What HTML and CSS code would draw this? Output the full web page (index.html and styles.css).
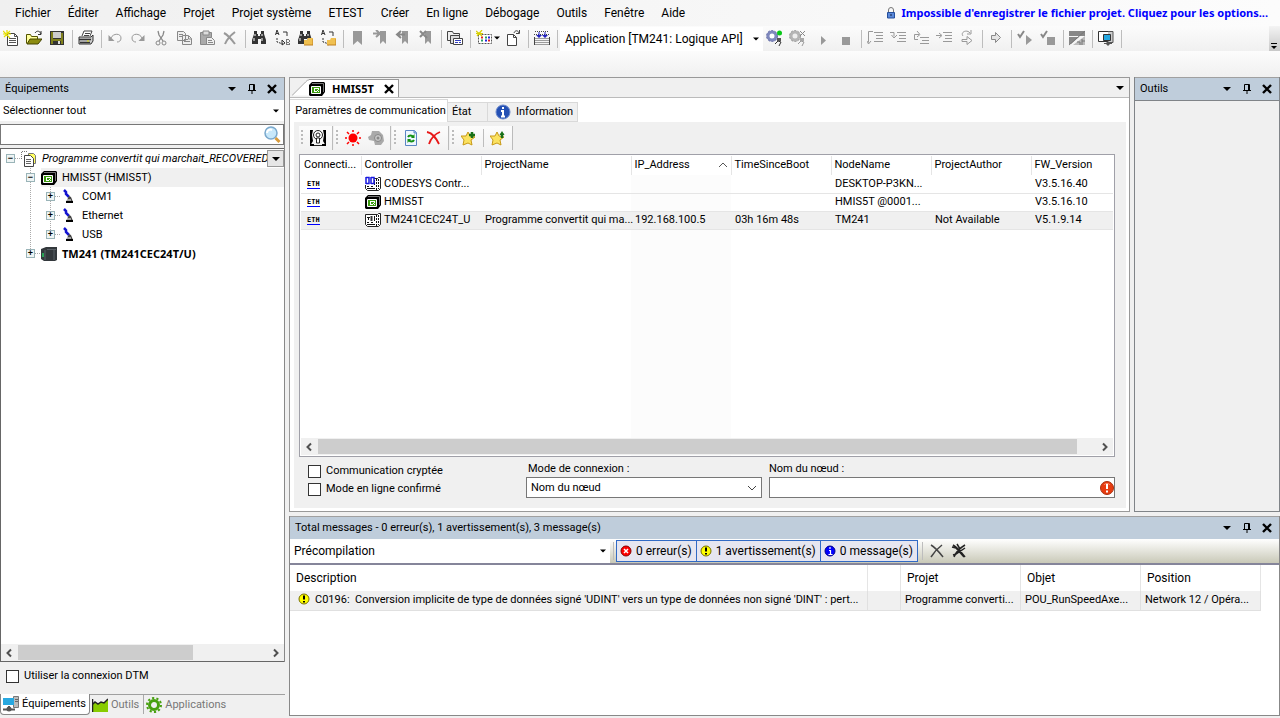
FILE: index.html
```html
<!DOCTYPE html>
<html lang="fr">
<head>
  <meta charset="UTF-8">
  <title>HMIS5T</title>
  <link rel="stylesheet" href="styles.css">
</head>
<body>

  <!-- icon sprite -->
  <svg class="sprite">
    <symbol id="new" viewBox="0 0 16 16"><path d="M4.500 3.500h7l3 3v9h-10z" fill="#fff" stroke="#444"/><path d="M11.500 3.500v3h3M6 8.500h7M6 10.500h7M6 12.500h7" fill="none" stroke="#555"/><path d="M0 1l7 7M7 1L1 7M4 0v4M0 4h8" stroke="#e6e000" stroke-width="1.200"/></symbol>
    <symbol id="open" viewBox="0 0 16 16"><path d="M.5 13.500v-9h4l1 2h6v3" fill="#ffff9c" stroke="#555500"/><path d="M1 14l3-5h12l-4 5z" fill="#8c8c10" stroke="#444400"/><path d="M9 3c2-3 5-2 6 1M15 1v3.500h-3" fill="none" stroke="#333"/></symbol>
    <symbol id="save" viewBox="0 0 16 16"><path d="M1 1h14v14H1z" fill="#333"/><path d="M2 2h2v12H2zM12 3h2v11h-2zM4 9h8v2H4z" fill="#80801c"/><path d="M4 2h8v6H4z" fill="#ccc"/><path d="M9 11h2v3H9z" fill="#ddd"/></symbol>
    <symbol id="print" viewBox="0 0 16 16"><path d="M4 6l2-5h8l-2 5" fill="#fff" stroke="#444"/><path d="M7 3.500h5M6 5.500h5" stroke="#444"/><path d="M1 7h12l2-2v6l-2 3H1z" fill="#ccc" stroke="#333"/><path d="M1 9.500h12M2 12.500h10" stroke="#333" stroke-width="1.500"/><path d="M9 11h2" stroke="#e0e000"/></symbol>
    <symbol id="undo" viewBox="0 0 16 16"><path d="M4 8c2-5 10-5 10 0 0 3-2 4-4 4" fill="none" stroke="#999"/><path d="M1.500 5v6h6z" fill="#999"/></symbol>
    <symbol id="redo" viewBox="0 0 16 16"><path d="M12 8C10 3 2 3 2 8c0 3 2 4 4 4" fill="none" stroke="#999"/><path d="M14.500 5v6h-6z" fill="#999"/></symbol>
    <symbol id="cut" viewBox="0 0 16 16"><path d="M5 1l1 4 4 6M11 1l-1 4-4 6" fill="none" stroke="#888" stroke-width="1.300"/><circle cx="5" cy="13" r="2" fill="none" stroke="#888"/><circle cx="11" cy="13" r="2" fill="none" stroke="#888"/></symbol>
    <symbol id="copy" viewBox="0 0 16 16"><path d="M1.500 1.500h6l2 2v7h-8zM6.500 5.500h6l3 3v6h-9z" fill="#eee" stroke="#888"/><path d="M3 4.500h4M3 6.500h3M8 9.500h4M8 11.500h6M12.500 6v3h3" stroke="#888" fill="none"/></symbol>
    <symbol id="paste" viewBox="0 0 16 16"><path d="M1.500 2.500h11v12h-11z" fill="#aaa" stroke="#888"/><path d="M4 1h6v4H4z" fill="#ddd" stroke="#888"/><path d="M7.500 7.500h5l3 3v4h-8z" fill="#eee" stroke="#888"/><path d="M9 10.500h4M9 12.500h5" stroke="#888"/></symbol>
    <symbol id="delete" viewBox="0 0 16 16"><path d="M2 3c4 2 8 7 11 11M13 2C9 5 5 9 3 14" fill="none" stroke="#999" stroke-width="2"/></symbol>
    <symbol id="find" viewBox="0 0 16 16"><path d="M3 1h3v3h1v2h2V4h1V1h3v3l2 6v4h-5V9H7v5H1v-4l2-6z" fill="#333"/><path d="M4 4v2M3 8v3M11 4v2M11 8v3" stroke="#fff"/></symbol>
    <symbol id="replace" viewBox="0 0 16 16"><path d="M1.500 5L3 0l2 5M2 3.500h2.500" fill="none" stroke="#333"/><path d="M12.500 9v6M12 9.500h3M12 12.500h3M12 14.500h3M15.500 10v2M15.500 13v2" fill="none" stroke="#777"/><path d="M3 8v4l6 2" fill="none" stroke="#333" stroke-dasharray="2 1"/><path d="M8 10v5l3-2zM9 2h4v4" fill="none" stroke="#333"/></symbol>
    <symbol id="folderbit" viewBox="0 0 16 16"><path d="M7 10h3l1-2h5v7H7z" fill="#f0c050"/><path d="M7 15h9V9" fill="none" stroke="#c08020"/></symbol>
    <symbol id="mark" viewBox="0 0 16 16"><path d="M4 1h9v14l-4.500-4L4 15z" fill="#999"/></symbol>
    <symbol id="marknext" viewBox="0 0 16 16"><path d="M8 1h6v13l-3-3-3 3z" fill="#999"/><path d="M1 3.500h6M4 0l4 3.500L4 7" fill="none" stroke="#999" stroke-width="2"/></symbol>
    <symbol id="markprev" viewBox="0 0 16 16"><path d="M7 1h6v13l-3-3-3 3z" fill="#999"/><path d="M10 4.500H3M6 1L2 4.500 6 8" fill="none" stroke="#888" stroke-width="2"/></symbol>
    <symbol id="markdel" viewBox="0 0 16 16"><path d="M7 1h6v13l-3-3-3 3z" fill="#999"/><path d="M2 1l7 7M8 1L2 7" fill="none" stroke="#888" stroke-width="2"/></symbol>
    <symbol id="windows" viewBox="0 0 16 16"><path d="M.5 10.500v-9h5l1 2h6v7z" fill="#eee" stroke="#444"/><path d="M3.500 5.500h9v8h-9z" fill="#ddd" stroke="#444"/><path d="M6.500 8.500h9v6h-9z" fill="#fff" stroke="#444"/><path d="M8 10.500h6M8 12.500h3M12 12.500h2" stroke="#3340c0"/></symbol>
    <symbol id="build" viewBox="0 0 16 16"><path d="M2.500 4.500h13v9h-13z" fill="#fff" stroke="#555" stroke-dasharray="2 1"/><path d="M5 7.500h2M12 10.500h2" stroke="#d22" stroke-width="2"/><path d="M9 7.500h2M5 10.500h2" stroke="#28a060" stroke-width="2"/><path d="M12 7.500h2M9 10.500h2" stroke="#22d" stroke-width="2"/><path d="M0 1l6 5M6 0L1 6M0 3.500h7" stroke="#d8d000" stroke-width="1.200"/></symbol>
    <symbol id="pageout" viewBox="0 0 16 16"><path d="M2.500 4.500h6l3 3v8h-9z" fill="#fff" stroke="#444"/><path d="M8.500 4.500v3h3M9 3c1-3 4-3 5 0M14.500 0v3.500H11" fill="none" stroke="#444"/></symbol>
    <symbol id="download" viewBox="0 0 16 16"><path d="M1 1.500h14M0 4.500h16M1.500 8.500h13M1.500 10.500h13M1.500 12.500h13M.5 14.500h15" stroke="#444" stroke-dasharray="1 1"/><path d="M.5 7v8M15.500 7v8" stroke="#444"/><path d="M5 2v5M11 2v5" stroke="#22c"/><path d="M2 5h6L5 8zM8 5h6l-3 3z" fill="#2222c0"/></symbol>
    <symbol id="login" viewBox="0 0 16 16"><circle cx="6" cy="6" r="4" fill="#fff" stroke="#7f88bd" stroke-width="3"/><circle cx="6" cy="6" r="5.500" fill="none" stroke="#6870a8" stroke-dasharray="2 1.500"/><circle cx="13.500" cy="3" r="2.500" fill="#08c818"/><path d="M11 8h4v3h-4z" fill="#555"/><path d="M9 14l3-3 3 1-2 4" fill="none" stroke="#333"/></symbol>
    <symbol id="logout" viewBox="0 0 16 16"><circle cx="6" cy="6" r="4" fill="#eee" stroke="#b5b5b5" stroke-width="3"/><circle cx="6" cy="6" r="5.500" fill="none" stroke="#999" stroke-dasharray="2 1.500"/><path d="M11 1l5 5M16 1l-5 5" stroke="#888"/><path d="M11 8h4v3h-4z" fill="#aaa"/><path d="M9 14l3-3 3 1-2 4" fill="none" stroke="#999"/></symbol>
    <symbol id="play" viewBox="0 0 16 16"><path d="M6 6l5 4.500L6 15z" fill="#999"/></symbol>
    <symbol id="stop" viewBox="0 0 16 16"><path d="M4 7h8v8H4z" fill="#999"/></symbol>
    <symbol id="stepover" viewBox="0 0 16 16"><path d="M6 1.500H1.500v11M0 11l1.500 3L4 11M7 2.500h9M9 5.500h7M9 8.500h7M7 11.500h9" fill="none" stroke="#999"/></symbol>
    <symbol id="stepinto" viewBox="0 0 16 16"><path d="M0 2.500h4v4M1.500 5L4 8l3-3M7 2.500h9M9 5.500h7M9 8.500h7M7 11.500h9" fill="none" stroke="#999"/></symbol>
    <symbol id="stepout" viewBox="0 0 16 16"><path d="M5 9.500H1.500v-5H6M4 1l3 3.500L4 7M7 7.500h9M9 10.500h7M7 13.500h9" fill="none" stroke="#999"/></symbol>
    <symbol id="runto" viewBox="0 0 16 16"><path d="M0 5.500h5M3 3l3 2.500L3 8M7 2.500h9M9 5.500h7M9 8.500h7M7 11.500h9" fill="none" stroke="#999"/></symbol>
    <symbol id="cycle" viewBox="0 0 16 16"><path d="M4 6c-3-4 4-7 7-3M12 0v4H8M3 9.500h5v-3l5 4-5 4v-3H3z" fill="none" stroke="#999"/></symbol>
    <symbol id="arrow" viewBox="0 0 16 16"><path d="M3.500 5.500h4v-3l5 5-5 5v-3h-4z" fill="#e4e4e4" stroke="#888"/></symbol>
    <symbol id="checkplay" viewBox="0 0 16 16"><path d="M1 4l2 3 4-6" fill="none" stroke="#888" stroke-width="2"/><path d="M9 5l6 5-6 5z" fill="#999"/></symbol>
    <symbol id="checkstop" viewBox="0 0 16 16"><path d="M1 4l2 3 4-6" fill="none" stroke="#888" stroke-width="2"/><path d="M7 7h8v8H7z" fill="#999"/></symbol>
    <symbol id="layout" viewBox="0 0 16 16"><path d="M0 1h16v5H0zM0 7h10L2 14H0z" fill="#888"/><path d="M16 6L4 15h12z" fill="#bbb"/><path d="M16 1L0 15M8 12h3v3M13 9v6M13 11h3" stroke="#777" fill="none"/></symbol>
    <symbol id="remote" viewBox="0 0 16 16"><path d="M.5 1.500h10v10H.5z" fill="#fff" stroke="#333"/><path d="M10 1.500h5v11h-5" fill="#ccc" stroke="#555"/><path d="M5.500 4.500h7v6h-7z" fill="#26a8e0" stroke="#333"/><path d="M6 13.500h8M9 12h2v3H9z" fill="#555" stroke="#555"/></symbol>
    <symbol id="lock" viewBox="0 0 10 12"><path d="M2.500 5V3a2.500 2.500 0 0 1 5 0v2" fill="none" stroke="#777"/><path d="M1.500 5.500h7V11h-7z" fill="#5a88d8" stroke="#244f9c"/><path d="M5 7v2" stroke="#124"/></symbol>
    <symbol id="down" viewBox="0 0 10 10"><path d="M1 3h8L5 7z" fill="#000"/></symbol>
    <symbol id="downsmall" viewBox="0 0 10 10"><path d="M2 3.500h6L5 6.500z" fill="#000"/></symbol>
    <symbol id="more" viewBox="0 0 10 10"><path d="M2 2.500h6" stroke="#000"/><path d="M2 5h6L5 8z" fill="#000"/></symbol>
    <symbol id="pin" viewBox="0 0 10 10"><path d="M2.500 6V.5h5V6M6.500 1v5M1 6.500h8M5 7v3" fill="none" stroke="#000"/></symbol>
    <symbol id="close" viewBox="0 0 10 10"><path d="M1 1l8 8M9 1L1 9" stroke="#000" stroke-width="2.400"/></symbol>
    <symbol id="search" viewBox="0 0 18 18"><circle cx="8" cy="7" r="6" fill="#c8e8fa" stroke="#7aa8cc" stroke-width="1.500"/><path d="M4 7c0-3 3-4 5-3" stroke="#fff" stroke-width="2" fill="none"/><path d="M12.500 12l4 4" stroke="#d89a3a" stroke-width="3"/></symbol>
    <symbol id="project" viewBox="0 0 16 16"><path d="M.5 8V.5H7" fill="none" stroke="#777" stroke-dasharray="1 1"/><path d="M7.500 2.500h5l2 2v8h-7z" fill="#ffff60" stroke="#777"/><path d="M3.500 4.500h6l3 3v8h-9z" fill="#fff" stroke="#444"/><path d="M5 8.500h5M5 10.500h5M5 12.500h5" stroke="#666"/></symbol>
    <symbol id="hmi" viewBox="0 0 16 16"><path d="M0 4l3-3h12l1 1v9l-3 4H1l-1-1z" fill="#000"/><path d="M3 2.500h11.500V11" fill="none" stroke="#777"/><path d="M2.500 5.500h9v7h-9z" fill="#3c9c10" stroke="#fff"/><path d="M5 10.500h3M5 7.500h5M5.500 7v3M9.500 7v2M8 9l2 2" fill="none" stroke="#fff"/></symbol>
    <symbol id="port" viewBox="0 0 16 16"><path d="M3 1l2 2v2l3 3" fill="none" stroke="#1414d0" stroke-width="2.500"/><path d="M8 7l2 1 2 5H5z" fill="#444"/><path d="M6 11h4" stroke="#fff"/><path d="M5 13h7" stroke="#000" stroke-width="2"/></symbol>
    <symbol id="plc" viewBox="0 0 16 16"><path d="M0 3l5-2h11v13l-2 1H3l-3-2z" fill="#33383c"/><path d="M4 4v10M6 3.500h9M13 4v10" stroke="#596066"/><path d="M2 7v4" stroke="#28c860" stroke-width="1.500"/></symbol>
    <symbol id="ctrl" viewBox="0 0 16 16"><path d="M.5 2.500h12l1-1h2v11l-2 2h-11l-2-2z" fill="#fff" stroke="#222"/><path d="M2 5.500h3M3.500 5v3M2 10.500h2M6 10.500h2M2 12.500h8M9.500 4v5" stroke="#111"/><path d="M6.500 4v5" stroke="#333" stroke-width="2"/><path d="M11.500 3v11M13.500 3v10" stroke="#111" stroke-dasharray="2 1"/></symbol>
    <symbol id="codesys" viewBox="0 0 16 16"><use href="#ctrl"/><path d="M0 0h9v9H0z" fill="#fff"/><path d="M1 1v7M1 1.500h3v6H1M6 1v7M6 1.500h3v6H6" fill="none" stroke="#1818e0" stroke-width="1.500"/></symbol>
    <symbol id="antenna" viewBox="0 0 16 16"><path d="M0 0h3L2 5l1 6-3 5zM16 0h-3l1 5-1 6 3 5z" fill="#000"/><circle cx="8" cy="5" r="4.500" fill="#fff" stroke="#222"/><circle cx="8" cy="5" r="2" fill="#fff" stroke="#222"/><path d="M6.500 8h3v5h-3zM4 15.500h8" fill="#fff" stroke="#222"/><path d="M0 14h4v2H0zM12 14h4v2h-4z"/></symbol>
    <symbol id="flash" viewBox="0 0 16 16"><circle cx="8" cy="8" r="4.500" fill="#f00"/><path d="M8 0v2M8 14v2M0 8h2M14 8h2M2 2l2 2M12 12l2 2M14 2l-2 2M4 12l-2 2" stroke="#f00" stroke-width="1.500"/></symbol>
    <symbol id="horn" viewBox="0 0 16 16"><path d="M0 7l3-2 1-4h7l4 4 1 6-3 4H7l-1-4-5-1z" fill="#aaa"/><circle cx="10" cy="8" r="3.500" fill="#c8c8c8" stroke="#888"/><circle cx="10" cy="8" r="1.500" fill="#888"/></symbol>
    <symbol id="refresh" viewBox="0 0 16 16"><path d="M2.500.5h9l2 2v13h-11z" fill="#eef6ff" stroke="#5b86c4"/><path d="M11 .5v2.500h2.500" fill="#a8c8f0" stroke="#5b86c4"/><path d="M5 7c1-2 4-2 5 0M11 10c-1 2-4 2-5 0" fill="none" stroke="#149014" stroke-width="2"/><path d="M11.500 4v4H8zM4.500 13V9H8z" fill="#149014"/></symbol>
    <symbol id="redx" viewBox="0 0 16 16"><path d="M1 2c6 1 9 6 12 12M14 2C9 4 5 8 3 14" fill="none" stroke="#e81818" stroke-width="1.800"/></symbol>
    <symbol id="starplus" viewBox="0 0 16 16"><path d="M7 2l2 4 5 1-4 3 1 5-4-2-5 2 1-5-3-4h5z" fill="#fbe260" stroke="#c89a18"/><path d="M8 5h6M11 2v6" stroke="#187018" stroke-width="2.500"/></symbol>
    <symbol id="starup" viewBox="0 0 16 16"><path d="M7 2l2 4 5 1-4 3 1 5-4-2-5 2 1-5-3-4h5z" fill="#fbe260" stroke="#c89a18"/><path d="M12 8V3" stroke="#187018" stroke-width="2.500"/><path d="M9.500 5L12 1l2.500 4z" fill="#187018"/></symbol>
    <symbol id="info" viewBox="0 0 16 16"><circle cx="8" cy="8" r="7" fill="#2450b4" stroke="#6a88cc"/><path d="M8 3v2M6 7h2v5M6 12.500h4" fill="none" stroke="#fff" stroke-width="2"/></symbol>
    <symbol id="error" viewBox="0 0 12 12"><circle cx="6" cy="6" r="5" fill="#f00" stroke="#800"/><path d="M4 4l4 4M8 4L4 8" stroke="#fff" stroke-width="1.500"/></symbol>
    <symbol id="warn" viewBox="0 0 12 12"><circle cx="6" cy="6" r="5" fill="#ff0" stroke="#776f00"/><path d="M6 2.500v4M6 8v1.500" stroke="#000" stroke-width="2"/></symbol>
    <symbol id="msg" viewBox="0 0 12 12"><circle cx="6" cy="6" r="5" fill="#00f" stroke="#008"/><path d="M6 2v2M5 5.500h1.500V9M4.500 9.500h4" fill="none" stroke="#fff" stroke-width="1.200"/></symbol>
    <symbol id="alert" viewBox="0 0 14 14"><circle cx="7" cy="7" r="6.500" fill="#e83c10" stroke="#a83010"/><path d="M4 4c1-2 5-2 6 0" stroke="#ff9070" fill="none"/><path d="M7 3v5M7 9.500v2" stroke="#fff" stroke-width="2"/></symbol>
    <symbol id="x1" viewBox="0 0 16 16"><path d="M2 2c5 3 8 7 12 12M13 2C9 5 5 9 2 14" fill="none" stroke="#444" stroke-width="1.500"/></symbol>
    <symbol id="x2" viewBox="0 0 16 16"><path d="M2 2c5 3 8 7 12 12M14 2C9 5 5 9 3 14M1 4l4 1 8 9M14 5L5 11l-3 1M6 1l3 5" fill="none" stroke="#222" stroke-width="1.500"/></symbol>
    <symbol id="network" viewBox="0 0 16 16"><path d="M10.500.5h5v11h-5z" fill="#bbb" stroke="#777"/><path d="M12 3.500h3M12 5.500h3" stroke="#666"/><path d="M0 2h11v7H0z" fill="#28a8e0"/><path d="M0 13.500h12M6 10v3" stroke="#555" stroke-width="2"/><circle cx="6" cy="13" r="2.500" fill="#555"/></symbol>
    <symbol id="chart" viewBox="0 0 16 16"><path d="M0 15V8l3-3 3 2 3-2 3 1 4-4v13z" fill="#8c0"/><path d="M.5 2v13M0 8l3-3 3 2 3-2 3 1 4-4" fill="none" stroke="#222" stroke-width="1.500"/></symbol>
    <symbol id="gear" viewBox="0 0 16 16"><circle cx="8" cy="8" r="4.500" fill="none" stroke="#48a010" stroke-width="3"/><circle cx="8" cy="8" r="7" fill="none" stroke="#48a010" stroke-width="2" stroke-dasharray="2.200 2.200"/></symbol>
    <symbol id="left" viewBox="0 0 10 10"><path d="M6 1.500L2.500 5 6 8.500" fill="none" stroke="#505050" stroke-width="2"/></symbol>
    <symbol id="right" viewBox="0 0 10 10"><path d="M3 1.500L6.500 5 3 8.500" fill="none" stroke="#505050" stroke-width="2"/></symbol>
    <symbol id="chevron" viewBox="0 0 10 10"><path d="M1 3l4 4 4-4" fill="none" stroke="#444"/></symbol>
    <symbol id="sort" viewBox="0 0 10 10"><path d="M1 7l4-4 4 4" fill="none" stroke="#555"/></symbol>
  </svg>

  <header class="menubar">
    <nav class="menu">
      <a href="#">Fichier</a>
      <a href="#">Éditer</a>
      <a href="#">Affichage</a>
      <a href="#">Projet</a>
      <a href="#">Projet système</a>
      <a href="#">ETEST</a>
      <a href="#">Créer</a>
      <a href="#">En ligne</a>
      <a href="#">Débogage</a>
      <a href="#">Outils</a>
      <a href="#">Fenêtre</a>
      <a href="#">Aide</a>
    </nav>
    <a class="notice" href="#"><svg class="lock"><use href="#lock"/></svg>Impossible d'enregistrer le fichier projet. Cliquez pour les options...</a>
  </header>

  <div class="toolbar">
    <button aria-label="Nouveau"><svg><use href="#new"/></svg></button>
    <button aria-label="Ouvrir"><svg><use href="#open"/></svg></button>
    <button aria-label="Enregistrer"><svg><use href="#save"/></svg></button>
    <span class="sep"></span>
    <button aria-label="Imprimer"><svg><use href="#print"/></svg></button>
    <span class="sep"></span>
    <button aria-label="Annuler"><svg><use href="#undo"/></svg></button>
    <button aria-label="Rétablir"><svg><use href="#redo"/></svg></button>
    <button aria-label="Couper"><svg><use href="#cut"/></svg></button>
    <button aria-label="Copier"><svg><use href="#copy"/></svg></button>
    <button aria-label="Coller"><svg><use href="#paste"/></svg></button>
    <button aria-label="Supprimer"><svg><use href="#delete"/></svg></button>
    <span class="sep"></span>
    <button aria-label="Rechercher"><svg><use href="#find"/></svg></button>
    <button aria-label="Remplacer"><svg><use href="#replace"/></svg></button>
    <button aria-label="Rechercher dans le projet"><svg><use href="#find"/><use href="#folderbit"/></svg></button>
    <button aria-label="Remplacer dans le projet"><svg><use href="#replace"/><use href="#folderbit"/></svg></button>
    <span class="sep"></span>
    <button aria-label="Signet"><svg><use href="#mark"/></svg></button>
    <button aria-label="Signet suivant"><svg><use href="#marknext"/></svg></button>
    <button aria-label="Signet précédent"><svg><use href="#markprev"/></svg></button>
    <button aria-label="Effacer les signets"><svg><use href="#markdel"/></svg></button>
    <span class="sep"></span>
    <button aria-label="Fenêtres"><svg><use href="#windows"/></svg></button>
    <span class="sep"></span>
    <button class="split" aria-label="Ajouter un objet"><svg><use href="#build"/></svg><svg class="glyph"><use href="#downsmall"/></svg></button>
    <button aria-label="Modifier l'objet"><svg><use href="#pageout"/></svg></button>
    <span class="sep"></span>
    <button aria-label="Compiler"><svg><use href="#download"/></svg></button>
    <span class="sep"></span>
    <button class="app-combo">Application [TM241: Logique API]<svg class="glyph"><use href="#downsmall"/></svg></button>
    <button aria-label="Connexion"><svg><use href="#login"/></svg></button>
    <button aria-label="Déconnexion"><svg><use href="#logout"/></svg></button>
    <span class="space"></span>
    <button aria-label="Démarrer"><svg><use href="#play"/></svg></button>
    <button aria-label="Arrêter"><svg><use href="#stop"/></svg></button>
    <span class="sep"></span>
    <button aria-label="Pas à pas principal"><svg><use href="#stepover"/></svg></button>
    <button aria-label="Pas à pas détaillé"><svg><use href="#stepinto"/></svg></button>
    <button aria-label="Pas à pas sortant"><svg><use href="#stepout"/></svg></button>
    <button aria-label="Exécuter jusqu'au curseur"><svg><use href="#runto"/></svg></button>
    <button aria-label="Cycle unique"><svg><use href="#cycle"/></svg></button>
    <span class="sep"></span>
    <button aria-label="Instruction suivante"><svg><use href="#arrow"/></svg></button>
    <span class="sep"></span>
    <button aria-label="Démarrer tout"><svg><use href="#checkplay"/></svg></button>
    <button aria-label="Arrêter tout"><svg><use href="#checkstop"/></svg></button>
    <span class="sep"></span>
    <button aria-label="Disposition"><svg><use href="#layout"/></svg></button>
    <span class="sep"></span>
    <button aria-label="Contrôle à distance"><svg><use href="#remote"/></svg></button>
    <span class="sep"></span>
    <button class="overflow" aria-label="Options de la barre"><svg class="glyph"><use href="#more"/></svg></button>
  </div>
  <div class="strip"></div>

  <main class="workspace">

    <aside class="devices">
      <div class="frame">
        <div class="title">
          <h2>Équipements</h2>
          <button aria-label="Menu"><svg><use href="#down"/></svg></button>
          <button aria-label="Épingler"><svg><use href="#pin"/></svg></button>
          <button aria-label="Fermer"><svg><use href="#close"/></svg></button>
        </div>
        <button class="select-all">Sélectionner tout<svg class="glyph"><use href="#downsmall"/></svg></button>
        <div class="search">
          <input type="text" aria-label="Rechercher">
          <svg><use href="#search"/></svg>
        </div>
        <div class="tree">
          <div class="node root">
            <span class="expander">−</span><svg><use href="#project"/></svg>
            <span class="name">Programme convertit qui marchait_RECOVERED</span>
            <button class="tree-drop" aria-label="Options"><svg class="glyph"><use href="#down"/></svg></button>
          </div>
          <ul>
            <li>
              <div class="node selected"><span class="expander">−</span><svg><use href="#hmi"/></svg><span class="name">HMIS5T (HMIS5T)</span></div>
              <ul>
                <li class="node"><span class="expander">+</span><svg><use href="#port"/></svg><span class="name">COM1</span></li>
                <li class="node"><span class="expander">+</span><svg><use href="#port"/></svg><span class="name">Ethernet</span></li>
                <li class="node"><span class="expander">+</span><svg><use href="#port"/></svg><span class="name">USB</span></li>
              </ul>
            </li>
            <li class="node active"><span class="expander">+</span><svg><use href="#plc"/></svg><span class="name">TM241 (TM241CEC24T/U)</span></li>
          </ul>
          <div class="scrollbar">
            <button aria-label="Défiler à gauche"><svg><use href="#left"/></svg></button>
            <span class="thumb tree-thumb"></span>
            <button aria-label="Défiler à droite"><svg><use href="#right"/></svg></button>
          </div>
        </div>
      </div>
      <label class="check dtm"><input type="checkbox">Utiliser la connexion DTM</label>
      <div class="bottom-tabs">
        <button class="current"><svg><use href="#network"/></svg>Équipements</button>
        <button><svg><use href="#chart"/></svg>Outils</button>
        <button><svg><use href="#gear"/></svg>Applications</button>
      </div>
    </aside>

    <div class="center">
      <div class="upper">
        <section class="editor">
          <div class="doc-tabs">
            <svg class="slant" viewBox="0 0 20 19"><path d="M0 19L16 3q3-2.500 4-2.500V19z" fill="#fff"/><path d="M0 19L16 3q2-2.500 4-2.500" fill="none" stroke="#999"/></svg>
            <div class="doc-tab">
              <svg><use href="#hmi"/></svg>
              <span>HMIS5T</span>
              <button aria-label="Fermer l'onglet"><svg class="glyph"><use href="#close"/></svg></button>
            </div>
            <button class="doc-list" aria-label="Liste des onglets"><svg class="glyph"><use href="#down"/></svg></button>
          </div>
          <div class="page-tabs">
            <button class="current">Paramètres de communication</button>
            <button class="state">État</button>
            <button class="information"><svg><use href="#info"/></svg>Information</button>
          </div>
          <div class="page">
            <div class="tools">
              <div class="group"><button aria-label="Connexion"><svg><use href="#antenna"/></svg></button></div>
              <div class="group"><button aria-label="Clignoter"><svg><use href="#flash"/></svg></button><button aria-label="Avertisseur"><svg><use href="#horn"/></svg></button></div>
              <div class="group"><button aria-label="Actualiser"><svg><use href="#refresh"/></svg></button><button aria-label="Retirer"><svg><use href="#redx"/></svg></button></div>
              <div class="group"><button aria-label="Ajouter aux favoris"><svg><use href="#starplus"/></svg></button><span class="sep"></span><button aria-label="Favori"><svg><use href="#starup"/></svg></button></div>
            </div>
            <div class="grid">
              <table class="controllers">
                <colgroup>
                  <col class="w60"><col class="w120"><col class="w150"><col class="w100"><col class="w100"><col class="w100"><col class="w100"><col>
                </colgroup>
                <thead>
                  <tr><th>Connecti...</th><th>Controller</th><th>ProjectName</th><th class="sorted"><span>IP_Address<svg class="glyph"><use href="#sort"/></svg></span></th><th>TimeSinceBoot</th><th>NodeName</th><th>ProjectAuthor</th><th>FW_Version</th></tr>
                </thead>
                <tbody>
                  <tr><td><span class="eth">ETH</span></td><td><svg><use href="#codesys"/></svg>CODESYS Contr...</td><td></td><td></td><td></td><td>DESKTOP-P3KN...</td><td></td><td>V3.5.16.40</td></tr>
                  <tr><td><span class="eth">ETH</span></td><td><svg><use href="#hmi"/></svg>HMIS5T</td><td></td><td></td><td></td><td>HMIS5T @0001...</td><td></td><td>V3.5.16.10</td></tr>
                  <tr class="selected"><td><span class="eth">ETH</span></td><td><svg><use href="#ctrl"/></svg>TM241CEC24T_U</td><td>Programme convertit qui ma...</td><td>192.168.100.5</td><td>03h 16m 48s</td><td>TM241</td><td>Not Available</td><td>V5.1.9.14</td></tr>
                </tbody>
              </table>
              <div class="scrollbar">
                <button aria-label="Défiler à gauche"><svg><use href="#left"/></svg></button>
                <span class="thumb"></span>
                <span class="track-end"></span>
                <button aria-label="Défiler à droite"><svg><use href="#right"/></svg></button>
              </div>
            </div>
            <div class="connection">
              <div class="checks">
                <label class="check"><input type="checkbox">Communication cryptée</label>
                <label class="check"><input type="checkbox">Mode en ligne confirmé</label>
              </div>
              <div class="field mode">
                <label for="mode">Mode de connexion :</label>
                <div class="select-box">
                  <select id="mode"><option>Nom du nœud</option></select>
                  <svg class="glyph"><use href="#chevron"/></svg>
                </div>
              </div>
              <div class="field node-name">
                <label for="nodeName">Nom du nœud :</label>
                <div class="select-box">
                  <input type="text" id="nodeName">
                  <svg class="alert"><use href="#alert"/></svg>
                </div>
              </div>
            </div>
          </div>
        </section>

        <aside class="toolbox">
          <div class="title">
            <h2>Outils</h2>
            <button aria-label="Menu"><svg><use href="#down"/></svg></button>
            <button aria-label="Épingler"><svg><use href="#pin"/></svg></button>
            <button aria-label="Fermer"><svg><use href="#close"/></svg></button>
          </div>
        </aside>
      </div>

      <section class="messages">
        <div class="title">
          <h2>Total messages - 0 erreur(s), 1 avertissement(s), 3 message(s)</h2>
          <button aria-label="Menu"><svg><use href="#down"/></svg></button>
          <button aria-label="Épingler"><svg><use href="#pin"/></svg></button>
          <button aria-label="Fermer"><svg><use href="#close"/></svg></button>
        </div>
        <div class="filters">
          <button class="category">Précompilation<svg class="glyph"><use href="#downsmall"/></svg></button>
          <span class="sep"></span>
          <button class="filter"><svg><use href="#error"/></svg>0 erreur(s)</button>
          <button class="filter"><svg><use href="#warn"/></svg>1 avertissement(s)</button>
          <button class="filter"><svg><use href="#msg"/></svg>0 message(s)</button>
          <span class="sep"></span>
          <button class="clear" aria-label="Supprimer"><svg><use href="#x1"/></svg></button>
          <button class="clear" aria-label="Supprimer tout"><svg><use href="#x2"/></svg></button>
        </div>
        <table class="log">
          <colgroup>
            <col><col class="w33"><col class="w120"><col class="w120"><col class="w120">
          </colgroup>
          <thead>
            <tr><th>Description</th><th></th><th>Projet</th><th>Objet</th><th>Position</th></tr>
          </thead>
          <tbody>
            <tr><td><svg><use href="#warn"/></svg>C0196: &nbsp;Conversion implicite de type de données signé 'UDINT' vers un type de données non signé 'DINT' : pert...</td><td></td><td>Programme converti...</td><td>POU_RunSpeedAxe...</td><td>Network 12 / Opéra...</td></tr>
          </tbody>
        </table>
      </section>
    </div>
  </main>

</body>
</html>
```
FILE: styles.css
```css
* {
  box-sizing: border-box;
}

body {
  margin: 0;
  min-height: 100vh;
  display: flex;
  flex-direction: column;
  background: #f0f0f0;
  color: #000;
  font: 11px/16px Roboto, "Noto Sans", sans-serif;
}

button, input, select {
  font: inherit;
  color: inherit;
}

button {
  display: flex;
  align-items: center;
  justify-content: center;
  padding: 0;
  border: 0;
  background: none;
  white-space: nowrap;
}

svg {
  width: 16px;
  height: 16px;
  flex: none;
}

.sprite {
  display: none;
}

.glyph,
.scrollbar svg,
.title svg {
  width: 10px;
  height: 10px;
}

/* menu and main toolbar */
.menubar {
  display: flex;
  align-items: center;
  justify-content: space-between;
  height: 26px;
  padding: 0 12px 0 15px;
  background: linear-gradient(to right, #f0f0f0, #fcfcfc);
}

.menu {
  display: flex;
  gap: 17px;
  font-size: 12px;
  white-space: nowrap;
}

.menu a {
  color: #000;
  text-decoration: none;
}

.notice,
.doc-tab,
.node.active {
  font-family: "Noto Sans", sans-serif;
  font-weight: bold;
}

.notice {
  display: flex;
  align-items: center;
  gap: 5px;
  color: #00f;
  text-decoration: none;
  white-space: nowrap;
}

.notice .lock {
  width: 10px;
  height: 12px;
}

.toolbar {
  display: flex;
  align-items: center;
  height: 25px;
  background: linear-gradient(#fcfcfc, #f0f0f0);
}

.toolbar button {
  flex: none;
  justify-content: flex-start;
  width: 23px;
  height: 24px;
  padding: 0 0 1px 3px;
}

.sep {
  flex: none;
  width: 6px;
  height: 18px;
  background: linear-gradient(#bdbdbd, #bdbdbd) center / 1px 100% no-repeat;
}

.toolbar .split {
  width: 29px;
}

.toolbar .app-combo {
  justify-content: space-between;
  width: 203px;
  height: 24px;
  padding: 0 2px 0 5px;
  background: #fff;
  font-size: 12px;
}

.space {
  width: 3px;
}

.toolbar .overflow {
  align-items: flex-end;
  width: 11px;
  height: 25px;
  margin-left: auto;
  padding: 0;
  background: linear-gradient(#f4f4f4, #c8c8c8);
}

.strip {
  height: 26px;
  background: linear-gradient(#fcfcfc, #f0f0f0);
}

/* docked windows */
.workspace {
  flex: 1;
  display: flex;
  gap: 4px;
  padding-bottom: 2px;
}

.title {
  display: flex;
  align-items: center;
  height: 23px;
  padding: 0 2px 0 5px;
  background: #bfcddb;
  border-top: 1px solid #a0a0a0;
}

.title h2 {
  flex: 1;
  margin: 0;
  font-size: 11px;
  font-weight: normal;
}

.title button {
  width: 20px;
  height: 20px;
}

.devices {
  flex: none;
  display: flex;
  flex-direction: column;
  width: 285px;
}

.frame {
  flex: 1;
  display: flex;
  flex-direction: column;
  border-right: 1px solid #888;
}

.select-all {
  justify-content: space-between;
  height: 21px;
  padding: 1px 3px 0;
  background: #fff;
}

.search {
  display: flex;
  align-items: center;
  height: 21px;
  margin: 3px 0;
  padding-right: 2px;
  background: #fff;
  border: 1px solid #777;
}

.search input {
  flex: 1;
  min-width: 0;
  border: 0;
  outline: 0;
}

.search svg {
  width: 18px;
  height: 18px;
}

.tree {
  flex: 1;
  display: flex;
  flex-direction: column;
  background: #fff;
  border: 1px solid #666;
  border-right: 0;
}

.tree ul {
  margin: 0;
  padding-left: 20px;
  list-style: none;
  background: repeating-linear-gradient(#aaa 0 1px, transparent 1px 2px) 29px 0 / 1px calc(100% - 9px) no-repeat;
}

.node {
  display: flex;
  align-items: center;
  height: 19px;
  padding-left: 5px;
  background: repeating-linear-gradient(to right, #aaa 0 1px, transparent 1px 2px) 14px 9px / 6px 1px no-repeat;
  white-space: nowrap;
}

.node svg {
  margin-right: 5px;
}

.root {
  font-style: italic;
}

.root .name {
  flex: 1;
  min-width: 0;
  overflow: hidden;
}

.tree-drop {
  width: 17px;
  height: 17px;
  background: #e6e6e6;
  border: 1px solid #999;
}

.tree-drop svg {
  margin: 0;
}

.node.selected {
  background: linear-gradient(to right, transparent 20px, #f0f0f0 20px);
}

.expander {
  flex: none;
  width: 9px;
  height: 9px;
  margin-right: 6px;
  background: #eef4f4;
  border: 1px solid #9ab4b8;
  font: bold 9px/7px "Liberation Sans", sans-serif;
  text-align: center;
}

.scrollbar {
  display: flex;
  height: 17px;
  margin-top: auto;
  background: #f0f0f0;
}

.scrollbar button {
  width: 17px;
}

.thumb {
  flex: 1;
  margin: 1px 0;
  background: #cdcdcd;
}

.tree-thumb {
  flex: none;
  width: 175px;
  margin-right: auto;
}

.track-end {
  width: 19px;
}

.check {
  display: flex;
  align-items: center;
  gap: 5px;
  height: 18px;
}

.check input {
  appearance: none;
  width: 13px;
  height: 13px;
  margin: 0;
  background: #fff;
  border: 1px solid #333;
}

.dtm {
  height: 32px;
  padding: 0 6px 4px;
}

.bottom-tabs {
  display: flex;
  height: 22px;
  border-top: 1px solid #a0a0a0;
}

.bottom-tabs button {
  gap: 3px;
  height: 19px;
  padding: 0 4px 0 2px;
  border-right: 1px solid #aaa;
  color: #777;
}

.bottom-tabs button:last-child {
  border: 0;
}

.bottom-tabs .current {
  height: 21px;
  margin-top: -1px;
  padding-right: 3px;
  background: #fff;
  border: 1px solid #888;
  border-top: 0;
  border-radius: 0 0 4px 4px;
  color: #000;
}

.center {
  flex: 1;
  min-width: 0;
  display: flex;
  flex-direction: column;
  gap: 4px;
}

.upper {
  flex: 1;
  display: flex;
  gap: 4px;
}

.toolbox {
  width: 146px;
  border: 1px solid #808488;
  border-top: 0;
}

.toolbox .title {
  height: 24px;
  border-bottom: 1px solid #808488;
}

/* editor */
.editor {
  flex: 1;
  min-width: 0;
  display: flex;
  flex-direction: column;
  border: 1px solid #999;
}

.doc-tabs {
  display: flex;
  align-items: flex-end;
  height: 20px;
  padding-left: 2px;
  border-bottom: 1px solid #bbb;
}

.slant {
  width: 17px;
  height: 19px;
}

.doc-tab {
  display: flex;
  align-items: center;
  height: 18px;
  background: #fff;
  border-top: 1px solid #999;
  border-right: 1px solid #999;
}

.doc-tab span {
  margin: 0 10px 0 7px;
}

.doc-tab button {
  margin-right: 4px;
}

.doc-list {
  align-self: center;
  margin: 0 4px 0 auto;
}

.page-tabs {
  display: flex;
  align-items: flex-end;
  height: 24px;
  background: #fff;
}

.page-tabs button {
  height: 20px;
  background: #f0f0f0;
  border: 1px solid #d9d9d9;
  border-left: 0;
}

.page-tabs .current {
  width: 158px;
  height: 23px;
  padding: 0 0 1px 4px;
  background: #fff;
  border-bottom: 0;
}

.page-tabs .state {
  justify-content: flex-start;
  width: 40px;
  padding-left: 4px;
}

.page-tabs .information {
  gap: 5px;
  padding: 0 4px 0 7px;
}

.page {
  flex: 1;
  display: flex;
  flex-direction: column;
  padding: 4px 11px 4px 5px;
  border: solid #fff;
  border-width: 0 3px 3px 4px;
}

.tools {
  display: flex;
  height: 24px;
  margin-bottom: 4px;
}

.group {
  display: flex;
  align-items: center;
  margin-right: 1px;
  padding: 0 3px 0 7px;
  background: repeating-linear-gradient(#bbb 0 2px, transparent 2px 4px) 2px 4px / 2px 15px no-repeat, linear-gradient(#fcfcfc, #f2f2f2);
  border-right: 1px solid #bbb;
}

.group button {
  width: 23px;
}

.grid {
  flex: 1;
  display: flex;
  flex-direction: column;
  border: 1px solid #a0a0a8;
  padding: 1px;
  background: linear-gradient(#fcfcfc, #fcfcfc) 331px 20px / 100px 100% no-repeat, #fff;
}

table {
  width: 100%;
  table-layout: fixed;
  border-collapse: collapse;
}

th, td {
  padding: 0 0 0 4px;
  font-weight: normal;
  text-align: left;
  white-space: nowrap;
}

.w33 { width: 33px; }
.w60 { width: 60px; }
.w100 { width: 100px; }
.w120 { width: 120px; }
.w150 { width: 150px; }

.controllers th {
  height: 19px;
  padding: 0 0 2px 3px;
  border-right: 1px solid #e5e5e5;
}

.controllers th:last-child {
  border: 0;
}

.sorted span {
  display: flex;
  align-items: center;
  justify-content: space-between;
  padding-right: 3px;
}

.controllers td {
  height: 18px;
  border-bottom: 1px solid #e5e5e5;
}

.controllers td svg {
  vertical-align: middle;
  margin: 0 3px 0 0;
}

.controllers .selected {
  background: #f0f0f0;
}

.eth {
  display: inline-block;
  margin-left: 2px;
  border-bottom: 1px solid #00f;
  font: bold 7px/7px "DejaVu Sans Mono", monospace;
  vertical-align: 1px;
}

.connection {
  display: flex;
  align-items: flex-start;
  height: 47px;
  padding-top: 5px;
}

.checks {
  width: 227px;
  padding-left: 9px;
}

.field label {
  display: block;
  padding-left: 2px;
  line-height: 13px;
}

.mode {
  width: 236px;
  margin-right: 7px;
}

.node-name {
  flex: 1;
}

.node-name label {
  padding-left: 0;
}

.select-box {
  display: flex;
  align-items: center;
  height: 21px;
  margin-top: 2px;
  padding-right: 4px;
  background: #fff;
  border: 1px solid #777;
}

.select-box select,
.select-box input {
  flex: 1;
  min-width: 0;
  height: 19px;
  padding: 0 4px;
  border: 0;
  outline: 0;
  background: none;
  appearance: none;
}

.node-name .select-box {
  padding-right: 0;
}

.alert {
  width: 14px;
  height: 14px;
}

/* messages */
.messages {
  height: 200px;
  background: #fff;
  border: 1px solid #888;
  border-top: 0;
}

.filters {
  display: flex;
  align-items: center;
  height: 26px;
  background: linear-gradient(#fff, #c9c9b8);
  border-bottom: 2px solid #85859a;
}

.category {
  justify-content: space-between;
  width: 320px;
  height: 23px;
  padding: 0 2px 0 4px;
  background: #fff;
  font-size: 12px;
}

.filter {
  gap: 4px;
  height: 22px;
  margin-right: -1px;
  padding: 0 4px 0 3px;
  background: #e6e6f0;
  border: 1px solid #316ac5;
  font-size: 12px;
}

.filter svg,
.log svg {
  width: 12px;
  height: 12px;
}

.filters .filter + .sep {
  margin-left: 3px;
}

.filters .clear {
  width: 22px;
}

.log {
  width: calc(100% - 18px);
}

.log th {
  height: 26px;
  padding-left: 6px;
  border-right: 1px solid #e5e5e5;
  font-size: 12px;
}

.log td {
  height: 19px;
  background: #f0f0f0;
  border-right: 1px solid #e0e0e0;
  border-bottom: 1px solid #e0e0e0;
}

.log td:first-child {
  padding-left: 8px;
}

.log svg {
  margin-right: 5px;
  vertical-align: -2px;
}
```
